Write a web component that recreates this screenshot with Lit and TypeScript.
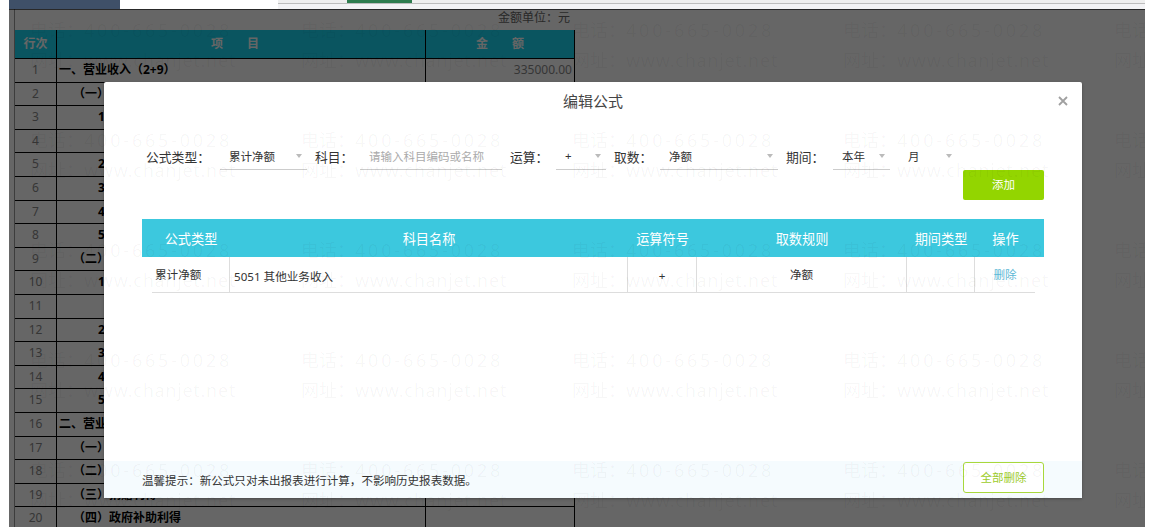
import { LitElement, html, css, nothing } from 'lit';
import { customElement } from 'lit/decorators.js';

const SHEET_ROWS = [
  { no: 1, text: '一、营业收入（2+9）', level: 0, amount: '335000.00' },
  { no: 2, text: '（一）', level: 1 },
  { no: 3, text: '1', level: 2 },
  { no: 4, text: '', level: 2 },
  { no: 5, text: '2', level: 2 },
  { no: 6, text: '3', level: 2 },
  { no: 7, text: '4', level: 2 },
  { no: 8, text: '5', level: 2 },
  { no: 9, text: '（二）', level: 1 },
  { no: 10, text: '1', level: 2 },
  { no: 11, text: '', level: 2 },
  { no: 12, text: '2', level: 2 },
  { no: 13, text: '3', level: 2 },
  { no: 14, text: '4', level: 2 },
  { no: 15, text: '5', level: 2 },
  { no: 16, text: '二、营业外收入', level: 0 },
  { no: 17, text: '（一）', level: 1 },
  { no: 18, text: '（二）', level: 1 },
  { no: 19, text: '（三）捐赠利得', level: 1 },
  { no: 20, text: '（四）政府补助利得', level: 1 },
];

// 筛选栏：标签宽度与下拉框宽度
const FILTERS = [
  { label: '公式类型：', labelWidth: 74, value: '累计净额', width: 87, arrow: true },
  { label: '科目：', labelWidth: 45, value: '请输入科目编码或名称', width: 142, placeholder: true },
  { label: '运算：', labelWidth: 46, value: '+', width: 50, arrow: true },
  { label: '取数：', labelWidth: 46, value: '净额', width: 118, arrow: true },
  { label: '期间：', labelWidth: 47, value: '本年', width: 57, arrow: true },
  { label: '', labelWidth: 0, value: '月', width: 59, arrow: true, plain: true },
];

const HEADERS = ['公式类型', '科目名称', '运算符号', '取数规则', '期间类型', '操作'];

const WATERMARK_CELLS = Array.from({ length: 25 });

@customElement('app-root')
export class AppRoot extends LitElement {
  static styles = css`
    :host {
      display: block;
      width: 1149px;
      height: 527px;
      overflow: hidden;
      background: #fff;
      font-family: "Noto Sans", "Noto Sans CJK SC", sans-serif;
      font-size: 11.6px;
      color: #333;
    }
    .topbar {
      height: 9px;
      display: flex;
      padding: 0 4px 0 9px;
    }
    .brand {
      width: 111px;
      background: #3f5068;
    }
    .tab-gap {
      width: 158px;
      background: #fff;
    }
    .tabs {
      flex: 1;
      background: #f3f3f5;
      padding-left: 69px;
      border-top: 3px solid #efefef;
      box-shadow: inset 0 1px 0 #bdbdbd;
    }
    .tab-active {
      width: 65px;
      height: 0;
      margin-top: -3px;
      border-top: 3px solid #2f7d4f;
    }
    .main {
      position: relative;
      height: 518px;
      margin: 0 4px 0 9px;
      overflow: hidden;
    }
    .sheet {
      height: 100%;
      margin-left: 5px;
      border-left: 1px solid #999;
      width: 560px;
    }
    .unit {
      height: 21px;
      line-height: 17px;
      text-align: right;
      padding-right: 5px;
      font-size: 12px;
      color: #666;
    }
    .sheet-row {
      display: grid;
      grid-template-columns: 42px 369px 149px;
      height: 23.6px;
      box-sizing: border-box;
      border-bottom: 1px solid #000;
      line-height: 22px;
      font-size: 12px;
    }
    .sheet-row > div {
      border-right: 1px solid #000;
      white-space: nowrap;
    }
    .sheet-row .no {
      text-align: center;
      color: #888;
    }
    .sheet-row .item {
      font-weight: 700;
      color: #000;
    }
    .sheet-row .amount {
      text-align: right;
      padding-right: 2px;
      color: #888;
    }
    .sheet-head {
      height: 29px;
      background: #19d5f0;
      line-height: 27px;
      color: #fff;
      font-weight: 700;
      text-align: center;
      border-bottom: 1px solid #000;
    }
    .sheet-head .item,
    .sheet-head .no,
    .sheet-head .amount {
      color: #fff;
      text-align: center;
      padding: 0;
      white-space: pre;
    }
    .sheet-head .item {
      padding-right: 12px;
    }
    .overlay {
      position: absolute;
      inset: 0;
      background: rgba(0, 0, 0, 0.6);
      border-top: 1px solid rgba(0, 0, 0, 0.6);
    }
    .modal {
      position: absolute;
      left: 95px;
      top: 73px;
      width: 978px;
      height: 416px;
      background: #fff;
      border-radius: 2px;
      box-shadow: 0 1px 3px rgba(0, 0, 0, 0.3);
      display: flex;
      flex-direction: column;
    }
    .modal-head {
      height: 37px;
      display: grid;
      grid-template-columns: 1fr auto 1fr;
      align-items: center;
      padding: 0 14px;
      font-size: 15px;
      color: #444;
    }
    .close {
      justify-self: end;
      display: block;
    }
    .filters {
      display: flex;
      gap: 8px;
      padding: 25px 0 0 42px;
      height: 26px;
      font-size: 12.8px;
    }
    .field {
      display: flex;
      align-items: center;
    }
    .field > span {
      margin-bottom: 2px;
    }
    .select {
      height: 26px;
      box-sizing: border-box;
      display: flex;
      align-items: center;
      justify-content: space-between;
      padding: 0 5px 2px 9px;
      font-size: 11.5px;
      border-bottom: 1px solid #ccc;
    }
    .select.plain {
      border-bottom-color: transparent;
      padding-left: 10px;
    }
    .select.placeholder {
      color: #aaa;
    }
    .arrow {
      width: 0;
      height: 0;
      border-left: 3.5px solid transparent;
      border-right: 3.5px solid transparent;
      border-top: 4px solid #bbb;
    }
    .actions {
      display: flex;
      justify-content: flex-end;
      padding-right: 38px;
    }
    .btn-add {
      width: 81px;
      height: 30px;
      line-height: 30px;
      border-radius: 2px;
      background: #93d500;
      color: #fff;
      text-align: center;
      font-size: 11.5px;
    }
    .table {
      margin: 19px 38px 0;
    }
    .thead,
    .tbody {
      display: grid;
    }
    .thead {
      grid-template-columns: 88px 398px 69px 210px 68px 69px;
      height: 38px;
      background: #3cc8de;
      color: #fff;
      font-size: 13.2px;
      align-items: center;
      text-align: center;
    }
    .thead .first {
      padding-left: 10px;
    }
    .thead .last {
      padding-right: 8px;
    }
    .tbody {
      grid-template-columns: 78px 398px 69px 210px 68px 60px;
      margin: 0 9px 0 10px;
      height: 35px;
      border-bottom: 1px solid #ddd;
      color: #333;
    }
    .tbody > div {
      display: flex;
      align-items: center;
      justify-content: center;
      border-right: 1px solid #ddd;
      padding-bottom: 1px;
    }
    .tbody > div:last-child {
      border-right: 0;
    }
    .tbody .left {
      justify-content: flex-start;
      padding-left: 3px;
    }
    .tbody .name {
      justify-content: flex-start;
      padding: 3px 0 0 4px;
    }
    .tbody .sign {
      padding: 1px 0 0;
    }
    .tbody .link {
      color: #5cb8d6;
    }
    .footer {
      margin-top: auto;
      height: 37px;
      display: flex;
      align-items: center;
      justify-content: space-between;
      padding: 0 38px;
      background: #f5fbfe;
      font-size: 11.55px;
    }
    .btn-clear {
      width: 81px;
      height: 31px;
      box-sizing: border-box;
      line-height: 29px;
      margin-top: -5px;
      border: 1px solid #a8d83c;
      border-radius: 3px;
      background: #fff;
      color: #9ccc2a;
      text-align: center;
    }
    .watermark {
      position: absolute;
      inset: 0;
      pointer-events: none;
      display: grid;
      grid-template-columns: repeat(5, 271px);
      grid-auto-rows: 110px;
      padding: 7px 0 0 21px;
      color: rgba(0, 0, 0, 0.04);
      font-size: 18px;
      line-height: 29.5px;
      white-space: nowrap;
    }
    .watermark .phone {
      letter-spacing: 2.8px;
    }
    .watermark .label {
      letter-spacing: 0;
    }
    .watermark .site {
      letter-spacing: 0.7px;
    }
  `;

  private renderSheet() {
    return html`
      <div class="sheet">
        <div class="unit">金额单位：元</div>
        <div class="sheet-row sheet-head">
          <div class="no">行次</div>
          <div class="item">项　　目</div>
          <div class="amount">金　　额</div>
        </div>
        ${SHEET_ROWS.map(
          (row) => html`
            <div class="sheet-row">
              <div class="no">${row.no}</div>
              <div class="item" style="padding-left: ${[2, 16, 41][row.level]}px">${row.text}</div>
              <div class="amount">${row.amount ?? ''}</div>
            </div>
          `
        )}
      </div>
    `;
  }

  private renderFilters() {
    return html`
      <div class="filters">
        ${FILTERS.map(
          (f) => html`
            <div class="field">
              ${f.label ? html`<span style="width: ${f.labelWidth}px">${f.label}</span>` : nothing}
              <div
                class="select ${f.placeholder ? 'placeholder' : ''} ${f.plain ? 'plain' : ''}"
                style="width: ${f.width}px"
              >
                <span>${f.value}</span>
                ${f.arrow ? html`<i class="arrow"></i>` : nothing}
              </div>
            </div>
          `
        )}
      </div>
    `;
  }

  private renderModal() {
    return html`
      <div class="modal">
        <div class="modal-head">
          <span></span>
          <span>编辑公式</span>
          <svg class="close" width="10" height="10" viewBox="0 0 10 10">
            <path d="M1 1L9 9M9 1L1 9" stroke="#a0a0a0" stroke-width="1.8" fill="none" />
          </svg>
        </div>
        ${this.renderFilters()}
        <div class="actions"><div class="btn-add">添加</div></div>
        <div class="table">
          <div class="thead">
            ${HEADERS.map(
              (h, i) => html`<div class="${['first', '', '', '', '', 'last'][i]}">${h}</div>`
            )}
          </div>
          <div class="tbody">
            <div class="left">累计净额</div>
            <div class="name">5051 其他业务收入</div>
            <div class="sign">+</div>
            <div>净额</div>
            <div></div>
            <div class="link">删除</div>
          </div>
        </div>
        <div class="footer">
          <span>温馨提示：新公式只对未出报表进行计算，不影响历史报表数据。</span>
          <div class="btn-clear">全部删除</div>
        </div>
      </div>
    `;
  }

  render() {
    return html`
      <div class="topbar">
        <div class="brand"></div>
        <div class="tab-gap"></div>
        <div class="tabs"><div class="tab-active"></div></div>
      </div>
      <div class="main">
        ${this.renderSheet()}
        <div class="overlay"></div>
        ${this.renderModal()}
        <div class="watermark">
          ${WATERMARK_CELLS.map(
            () => html`
              <div>
                <div class="phone"><span class="label">电话：</span>400-665-0028</div>
                <div class="site"><span class="label">网址：</span>www.chanjet.net</div>
              </div>
            `
          )}
        </div>
      </div>
    `;
  }
}
